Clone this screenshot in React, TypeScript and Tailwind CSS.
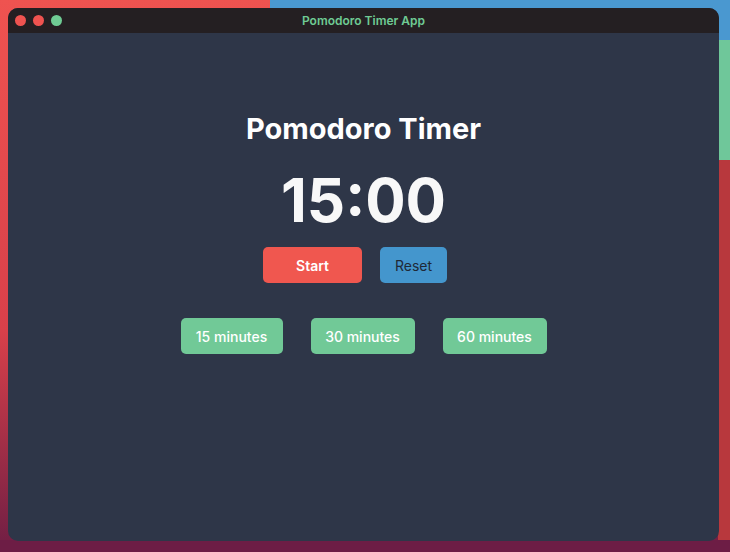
import React from "react";

export default function App() {
  return (
    <div
      className="relative h-[552px] w-[730px] overflow-hidden"
      style={{ fontFamily: "Inter, 'Noto Sans', sans-serif" }}
    >
      <div className="absolute inset-0 bg-[linear-gradient(180deg,#ef5350_0%,#d8404a_60%,#6e1e44_100%)]" />
      <div className="absolute left-[270px] right-0 top-0 h-[40px] bg-[#4a98d0]" />
      <div className="absolute right-0 top-[40px] h-[120px] w-[12px] bg-[#6fc79a]" />
      <div className="absolute right-0 top-[160px] bottom-0 w-[12px] bg-[#b8383d]" />
      <div className="absolute left-0 right-0 bottom-0 h-[12px] bg-[#6d1d45]" />

      <div className="relative ml-[8px] mt-[8px] flex h-[533px] w-[711px] flex-col overflow-hidden rounded-[10px] bg-[#2e3648]">
        <div className="relative flex h-[25px] shrink-0 items-center bg-[#241f22] px-[7px]">
          <div className="relative z-10 flex gap-[7px]">
            <div className="h-[11px] w-[11px] rounded-full bg-[#ef5350]" />
            <div className="h-[11px] w-[11px] rounded-full bg-[#ef5350]" />
            <div className="h-[11px] w-[11px] rounded-full bg-[#6fcb94]" />
          </div>
          <div className="absolute inset-0 flex items-center justify-center text-[12px] font-semibold text-[#6fcb94]">
            Pomodoro Timer App
          </div>
        </div>
        <div className="flex flex-1 flex-col items-center pt-[76px]">
          <h1 className="text-[29px] font-bold leading-[40px] text-white">Pomodoro Timer</h1>
          <div className="mt-[19px] text-[60px] font-bold leading-[64px] text-[#f8f8f8]">15:00</div>
          <div className="mt-[15px] flex gap-[18px] pr-[17px]">
            <button className="h-[36px] w-[99px] rounded-[5px] bg-[#f0574f] text-[14px] font-semibold text-white">
              Start
            </button>
            <button className="h-[36px] w-[67px] rounded-[5px] bg-[#4496cd] text-[14px] text-[#1f2937]">
              Reset
            </button>
          </div>
          <div className="mt-[35px] flex gap-[28px]">
            <button className="h-[36px] w-[102px] rounded-[5px] bg-[#71c997] text-[14px] font-medium text-white">
              15 minutes
            </button>
            <button className="h-[36px] w-[104px] rounded-[5px] bg-[#71c997] text-[14px] font-medium text-white">
              30 minutes
            </button>
            <button className="h-[36px] w-[104px] rounded-[5px] bg-[#71c997] text-[14px] font-medium text-white">
              60 minutes
            </button>
          </div>
        </div>
      </div>
    </div>
  );
}
